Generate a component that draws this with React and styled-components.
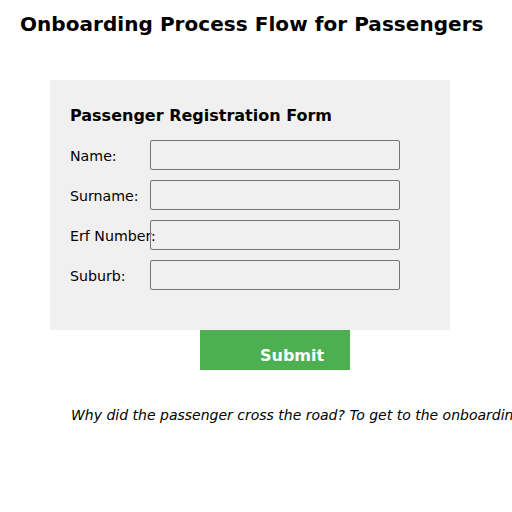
import React from 'react';
import styled, { createGlobalStyle } from 'styled-components';

const GlobalStyle = createGlobalStyle`
  body {
    margin: 0;
    background: #ffffff;
    font-family: "DejaVu Sans", sans-serif;
    color: #000;
  }
`;

const fields = ['Name:', 'Surname:', 'Erf Number:', 'Suburb:'];

export default function App() {
  return (
    <Page>
      <GlobalStyle />
      <Title>Onboarding Process Flow for Passengers</Title>
      <FormPanel>
        <FormTitle>Passenger Registration Form</FormTitle>
        {fields.map((label) => (
          <Row key={label}>
            <Label>{label}</Label>
            <Input type="text" />
          </Row>
        ))}
      </FormPanel>
      <SubmitButton>Submit</SubmitButton>
      <Joke>Why did the passenger cross the road? To get to the onboarding process!</Joke>
    </Page>
  );
}

const Page = styled.div`
  width: 512px;
  height: 512px;
  overflow: hidden;
  padding-top: 12px;
  box-sizing: border-box;
`;

const Title = styled.h1`
  margin: 0 0 0 20px;
  font-size: 20px;
  font-weight: bold;
  line-height: 24px;
  letter-spacing: 0.05px;
  white-space: nowrap;
`;

const FormPanel = styled.div`
  margin: 44px 0 0 50px;
  width: 400px;
  height: 250px;
  box-sizing: border-box;
  padding: 27px 20px 20px;
  background: #f0f0f0;
`;

const FormTitle = styled.h2`
  margin: 0 0 15px;
  font-size: 16px;
  font-weight: bold;
  line-height: 18px;
`;

const Row = styled.div`
  display: flex;
  align-items: center;
  height: 30px;
  margin-bottom: 10px;
`;

const Label = styled.label`
  width: 80px;
  padding-top: 2px;
  font-size: 14.2px;
  white-space: nowrap;
`;

const Input = styled.input`
  width: 250px;
  height: 30px;
  box-sizing: border-box;
  margin: 0;
  border: 1px solid #767676;
  border-radius: 2px;
  background: transparent;
`;

const SubmitButton = styled.button`
  display: block;
  margin-left: 200px;
  width: 150px;
  height: 40px;
  border: none;
  padding: 10px 0 0 60px;
  box-sizing: border-box;
  background: #4caf50;
  color: #ffffff;
  font-family: "DejaVu Sans", sans-serif;
  font-size: 16px;
  font-weight: bold;
  text-align: left;
`;

const Joke = styled.p`
  margin: 37px 0 0 71px;
  font-size: 14px;
  font-style: italic;
  white-space: nowrap;
`;
